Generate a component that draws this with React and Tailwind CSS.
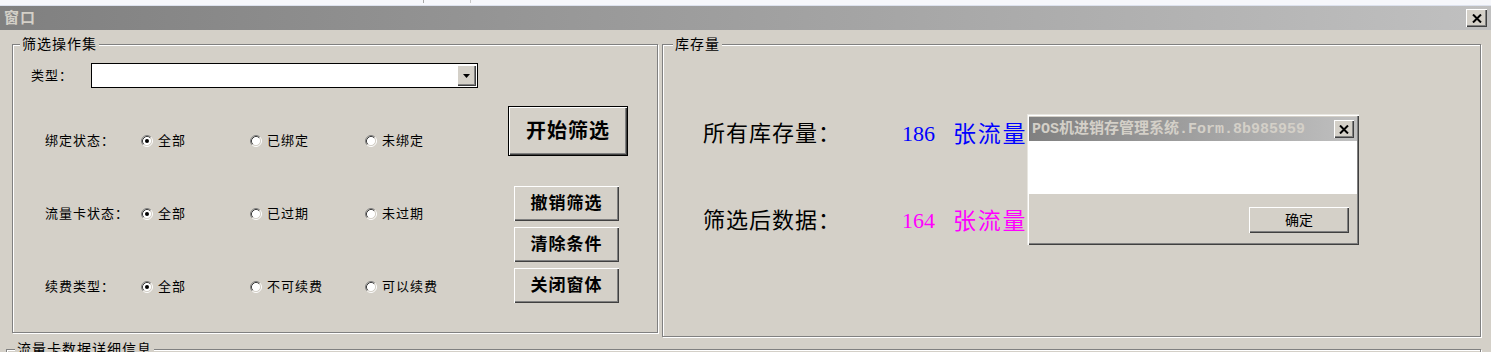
import React from "react";

const raised =
  "shadow-[inset_1px_1px_0_#ffffff,inset_-1px_-1px_0_#404040,inset_-2px_-2px_0_#808080]";

function Radio({ checked }) {
  return (
    <svg width="12" height="12" viewBox="0 0 12 12" className="shrink-0">
      <circle cx="6" cy="6" r="4.5" fill="#ffffff" />
      <path d="M9.89 2.11 A5.5 5.5 0 0 0 2.11 9.89" fill="none" stroke="#808080" strokeWidth="1" />
      <path d="M9.89 2.11 A5.5 5.5 0 0 1 2.11 9.89" fill="none" stroke="#ffffff" strokeWidth="1" />
      <path d="M9.18 2.82 A4.5 4.5 0 0 0 2.82 9.18" fill="none" stroke="#404040" strokeWidth="1" />
      <path d="M9.18 2.82 A4.5 4.5 0 0 1 2.82 9.18" fill="none" stroke="#d4d0c8" strokeWidth="1" />
      {checked && <circle cx="6" cy="6" r="2" fill="#000000" />}
    </svg>
  );
}

function CloseX() {
  return (
    <svg width="10" height="9" viewBox="0 0 10 9">
      <path d="M1 0.5 L9 8.5 M9 0.5 L1 8.5" stroke="#000" strokeWidth="2" />
    </svg>
  );
}

function RadioRow({ label, opts, className }) {
  return (
    <div className={"flex h-[20px] items-center text-[13px] leading-[20px] ml-[14px] " + className}>
      <div className="w-[96px] tracking-[1px]">{label}</div>
      <div className="flex w-[109px] items-center">
        <Radio checked />
        <span className="ml-[5px] tracking-[1px]">{opts[0]}</span>
      </div>
      <div className="flex w-[115px] items-center">
        <Radio />
        <span className="ml-[5px] tracking-[1px]">{opts[1]}</span>
      </div>
      <div className="flex items-center">
        <Radio />
        <span className="ml-[5px] tracking-[1px]">{opts[2]}</span>
      </div>
    </div>
  );
}

function SmallBtn({ children, className = "" }) {
  return (
    <div
      className={
        "ml-[6px] flex h-[35px] w-[105px] items-center justify-center bg-[#d4d0c8] text-[17px] font-bold tracking-[1px] " +
        raised +
        " " +
        className
      }
    >
      {children}
    </div>
  );
}

export default function App() {
  return (
    <div className="relative h-[352px] w-[1491px] overflow-hidden bg-[#d4d0c8] font-['Liberation_Sans','Noto_Sans_CJK_SC',sans-serif] text-black">
      {/* top strip */}
      <div className="flex h-[6px] items-start border-b border-[#dde2ee] bg-[#f6f7fb]">
        <div className="ml-[423px] h-[3px] w-px bg-[#a8a8a8]" />
        <div className="ml-[46px] h-[3px] w-px bg-[#c8c8c8]" />
      </div>

      {/* title bar */}
      <div className="flex h-[24px] items-center justify-between bg-linear-to-r from-[#808080] to-[#c0c0c0] pl-[4px] pr-[4px]">
        <span className="text-[15px] font-bold leading-[18px] tracking-[1px] text-[#d4d0c8]">窗口</span>
        <div className={"flex h-[18px] w-[21px] items-center justify-center bg-[#d4d0c8] " + raised}>
          <CloseX />
        </div>
      </div>

      {/* body */}
      <div className="pt-[14px]">
        <div className="flex items-start gap-[4px] pl-[12px]">
          {/* left group */}
          <div className="relative h-[289px] w-[646px] border border-[#808080] shadow-[inset_1px_1px_0_#ffffff,1px_1px_0_#ffffff]">
            <div className="absolute left-[7px] top-[-10px] bg-[#d4d0c8] px-[2px] text-[14px] leading-[18px] tracking-[1px]">
              筛选操作集
            </div>
            <div className="flex">
              <div className="w-[495px] pl-[18px] pt-[18px]">
                <div className="flex h-[25px] items-center">
                  <div className="w-[60px] text-[13px] tracking-[1px]">类型：</div>
                  <div className="flex h-[25px] w-[387px] justify-end border border-black bg-white p-px">
                    <div className={"flex h-[21px] w-[19px] items-center justify-center bg-[#d4d0c8] " + raised}>
                      <svg width="7" height="4" viewBox="0 0 7 4">
                        <path d="M0 0 H7 L3.5 4 Z" fill="#000" />
                      </svg>
                    </div>
                  </div>
                </div>
                <RadioRow className="mt-[43px]" label="绑定状态：" opts={["全部", "已绑定", "未绑定"]} />
                <RadioRow className="mt-[53px]" label="流量卡状态：" opts={["全部", "已过期", "未过期"]} />
                <RadioRow className="mt-[53px]" label="续费类型：" opts={["全部", "不可续费", "可以续费"]} />
              </div>
              <div className="flex flex-col items-start pt-[61px]">
                <div className="flex h-[50px] w-[120px] items-center justify-center border border-black bg-[#d4d0c8] text-[20px] font-bold tracking-[1px] shadow-[inset_1px_1px_0_#ffffff,inset_-1px_-1px_0_#404040,inset_-2px_-2px_0_#808080]">
                  开始筛选
                </div>
                <SmallBtn className="mt-[30px]">撤销筛选</SmallBtn>
                <SmallBtn className="mt-[6px]">清除条件</SmallBtn>
                <SmallBtn className="mt-[6px]">关闭窗体</SmallBtn>
              </div>
            </div>
          </div>

          {/* right group */}
          <div className="relative h-[293px] w-[819px] border border-[#808080] shadow-[inset_1px_1px_0_#ffffff,1px_1px_0_#ffffff]">
            <div className="absolute left-[10px] top-[-10px] bg-[#d4d0c8] px-[2px] text-[14px] leading-[18px] tracking-[1px]">
              库存量
            </div>
            <div className="pl-[40px] pt-[74px]">
              <div className="flex h-[30px] items-center text-[22px] leading-[30px]">
                <div className="w-[199px] tracking-[1px]">所有库存量：</div>
                <div className="w-[51px] font-['Liberation_Serif',serif] text-[#0000ff]">186</div>
                <div className="text-[23px] tracking-[1.8px] text-[#0000ff]">张流量卡</div>
              </div>
              <div className="mt-[57px] flex h-[30px] items-center text-[22px] leading-[30px]">
                <div className="w-[199px] tracking-[1px]">筛选后数据：</div>
                <div className="w-[51px] font-['Liberation_Serif',serif] text-[#ff00ff]">164</div>
                <div className="text-[23px] tracking-[1.8px] text-[#ff00ff]">张流量卡</div>
              </div>
            </div>
          </div>
        </div>

        {/* bottom group */}
        <div className="relative ml-[6px] mt-[12px] h-[40px] w-[1475px] border border-[#808080] shadow-[inset_1px_1px_0_#ffffff,1px_1px_0_#ffffff]">
          <div className="absolute left-[8px] top-[-10px] bg-[#d4d0c8] px-[2px] text-[14px] leading-[18px] tracking-[1px]">
            流量卡数据详细信息
          </div>
        </div>
      </div>

      {/* message dialog */}
      <div className="absolute left-[1027px] top-[114px] flex h-[131px] w-[332px] flex-col bg-[#d4d0c8] px-[2px] pt-[3px] shadow-[inset_1px_1px_0_#e8e6e0,inset_2px_2px_0_#ffffff,inset_-1px_-1px_0_#404040,inset_-2px_-2px_0_#808080]">
        <div className="flex h-[24px] items-center justify-between bg-linear-to-r from-[#808080] to-[#c0c0c0] pl-[3px] pr-[3px]">
          <span className="whitespace-nowrap text-[15px] font-bold leading-[18px] text-[#d4d0c8]">
            <span className="font-['Liberation_Mono',monospace]">POS</span>
            <span>机进销存管理系统</span>
            <span className="font-['Liberation_Mono',monospace]">.Form.8b985959</span>
          </span>
          <div className={"flex h-[18px] w-[20px] shrink-0 items-center justify-center bg-[#d4d0c8] " + raised}>
            <CloseX />
          </div>
        </div>
        <div className="h-[53px] bg-white" />
        <div className="flex justify-end pr-[8px] pt-[13px]">
          <div className={"flex h-[26px] w-[100px] items-center justify-center bg-[#d4d0c8] text-[14px] " + raised}>
            确定
          </div>
        </div>
      </div>
    </div>
  );
}
